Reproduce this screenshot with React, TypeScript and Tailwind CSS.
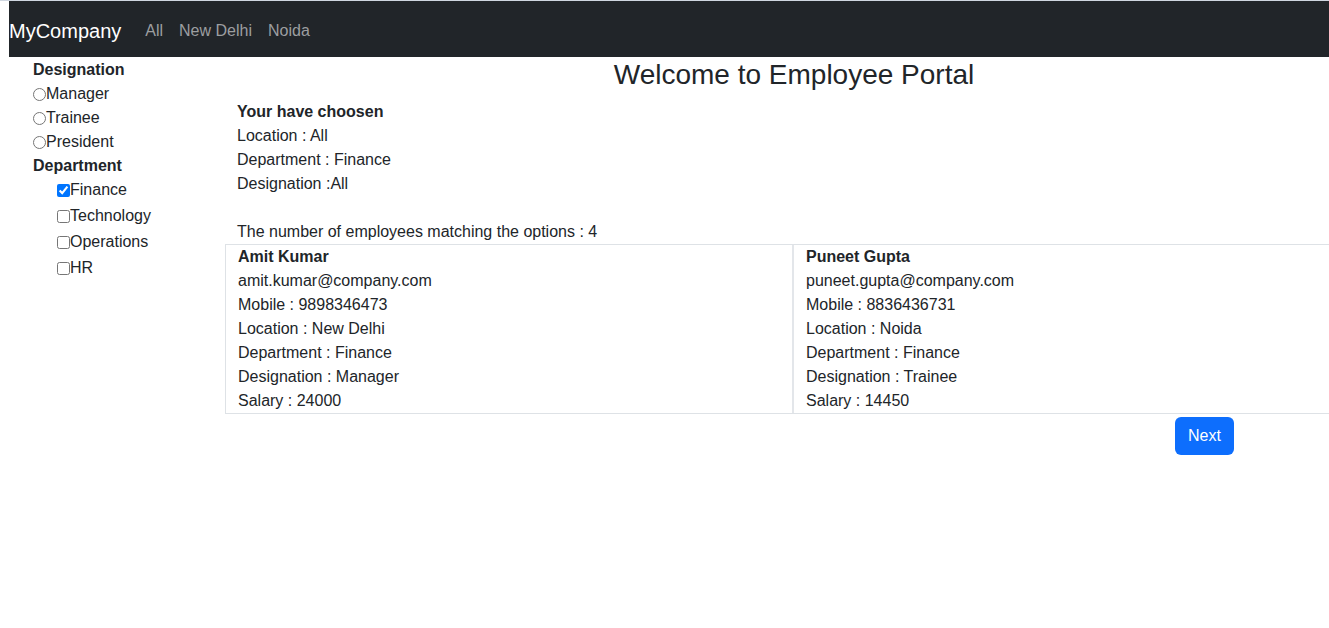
import React from 'react'

const employees = [
  {
    name: 'Amit Kumar',
    email: 'amit.kumar@company.com',
    mobile: '9898346473',
    location: 'New Delhi',
    department: 'Finance',
    designation: 'Manager',
    salary: '24000',
  },
  {
    name: 'Puneet Gupta',
    email: 'puneet.gupta@company.com',
    mobile: '8836436731',
    location: 'Noida',
    department: 'Finance',
    designation: 'Trainee',
    salary: '14450',
  },
]

const designations = ['Manager', 'Trainee', 'President']
const departments = ['Finance', 'Technology', 'Operations', 'HR']

function Sidebar() {
  return (
    <div className="w-[192px] shrink-0 pl-[24px] pt-[1px]">
      <div className="font-bold leading-[24px]">Designation</div>
      {designations.map((d) => (
        <label key={d} className="flex items-center h-[24px]">
          <input type="radio" name="designation" className="m-0 w-[13px] h-[13px]" />
          {d}
        </label>
      ))}
      <div className="font-bold leading-[24px]">Department</div>
      <div className="pl-[24px] -mt-[1px]">
        {departments.map((d) => (
          <label key={d} className="flex items-center h-[26px]">
            <input
              type="checkbox"
              defaultChecked={d === 'Finance'}
              className="m-0 w-[13px] h-[13px]"
            />
            {d}
          </label>
        ))}
      </div>
    </div>
  )
}

export default function App() {
  return (
    <div
      className="w-[1329px] h-[628px] overflow-hidden bg-white text-[#212529] text-[16px] leading-[24px]"
      style={{ fontFamily: '"Liberation Sans", Arial, sans-serif' }}
    >
      <div className="h-[1px] bg-[#cfd6e0]" />
      <div className="pl-[9px]">
        <nav className="h-[56px] bg-[#212529] flex items-center pt-[3px]">
          <span className="text-white text-[20px] leading-[30px] mr-[16px]">MyCompany</span>
          <span className="text-[#9c9ea0] px-[8px]">All</span>
          <span className="text-[#9c9ea0] px-[8px]">New Delhi</span>
          <span className="text-[#9c9ea0] px-[8px]">Noida</span>
        </nav>
        <div className="flex">
          <Sidebar />
          <div className="w-[1138px] shrink-0 ml-[24px]">
            <h3 className="text-center text-[28px] leading-[34px] font-medium mt-[1px] mb-[8px]">
              Welcome to Employee Portal
            </h3>
            <div className="pl-[12px]">
              <div className="font-bold">Your have choosen</div>
              <div>Location : All</div>
              <div>Department : Finance</div>
              <div>Designation :All</div>
              <div className="h-[24px]" />
              <div>The number of employees matching the options : 4</div>
            </div>
            <div className="grid grid-cols-2 border border-[#dee2e6]">
              {employees.map((e, i) => (
                <div
                  key={e.name}
                  className={i === 0 ? 'px-[12px] border-r-2 border-[#e3e6ea]' : 'px-[12px]'}
                >
                  <div className="font-bold">{e.name}</div>
                  <div>{e.email}</div>
                  <div>Mobile : {e.mobile}</div>
                  <div>Location : {e.location}</div>
                  <div>Department : {e.department}</div>
                  <div>Designation : {e.designation}</div>
                  <div>Salary : {e.salary}</div>
                </div>
              ))}
            </div>
            <div className="flex mt-[3px] pl-[950px]">
              <button className="h-[38px] px-[13px] rounded-[6px] bg-[#0d6efd] text-white">
                Next
              </button>
            </div>
          </div>
        </div>
      </div>
    </div>
  )
}
